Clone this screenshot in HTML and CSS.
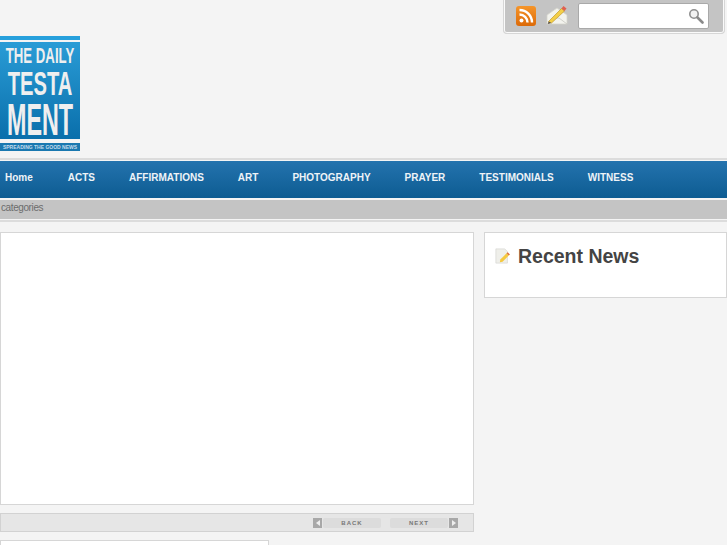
FILE: index.html
```html
<!DOCTYPE html>
<html lang="en">
<head>
    <meta charset="UTF-8">
    <meta name="viewport" content="width=device-width, initial-scale=1.0">
    <title>The Daily Testament</title>
    <link rel="stylesheet" href="styles.css">
</head>
<body>

    <!-- Top -->
    <header class="top">
        <div class="tools-row">
            <div class="tools">
                <a class="rss" href="#">
                    <svg width="20" height="20" viewBox="0 0 20 20">
                        <defs>
                            <linearGradient id="rssBg" x1="0" y1="0" x2="0" y2="1">
                                <stop offset="0" stop-color="#f5952a"/>
                                <stop offset="1" stop-color="#dc6a08"/>
                            </linearGradient>
                        </defs>
                        <rect width="20" height="20" rx="3" fill="url(#rssBg)"/>
                        <circle cx="5.500" cy="14.500" r="2" fill="#fff"/>
                        <path d="M3.500 8.500a8 8 0 0 1 8 8M3.500 4a12.500 12.500 0 0 1 12.500 12.500" fill="none" stroke="#fff" stroke-width="2.400"/>
                    </svg>
                </a>
                <a class="mail" href="#">
                    <svg width="22" height="22" viewBox="0 0 22 22">
                        <path d="M1 11 11 4l10 7v9H1z" fill="#f3f3ee" stroke="#d4d4cc" stroke-width=".8"/>
                        <path d="M1 20l8-6h4l8 6" stroke="#c8c8c0" stroke-width=".8" fill="none"/>
                        <path d="M2.500 17.500 15.500 4.500l3 2.500-13 12z" fill="#f4cf48" stroke="#b98f22" stroke-width=".6"/>
                        <path d="M2.500 17.500 2 20l3.500-1z" fill="#5a5040"/>
                        <path d="M15.500 4.500 17.500 2l3 2.500-2 2.500z" fill="#e0604f"/>
                    </svg>
                </a>
                <div class="search">
                    <svg width="16" height="16" viewBox="0 0 16 16">
                        <circle cx="6" cy="6" r="4.200" fill="#f2f2f2" stroke="#8f8f8f" stroke-width="1.600"/>
                        <path d="M9.500 9.500 14.500 14.500" stroke="#8a8a8a" stroke-width="2.600" stroke-linecap="round"/>
                    </svg>
                </div>
            </div>
        </div>

        <a class="logo" href="#">
            <span class="logo-main">
                <span class="logo-l1">THE DAILY</span>
                <span class="logo-l2">TESTA</span>
                <span class="logo-l3">MENT</span>
            </span>
            <span class="logo-tag">SPREADING THE GOOD NEWS</span>
        </a>
    </header>

    <!-- Menu -->
    <nav class="menu">
        <a class="home" href="#">Home</a>
        <a href="#">ACTS</a>
        <a href="#">AFFIRMATIONS</a>
        <a href="#">ART</a>
        <a href="#">PHOTOGRAPHY</a>
        <a href="#">PRAYER</a>
        <a href="#">TESTIMONIALS</a>
        <a href="#">WITNESS</a>
    </nav>

    <div class="cats">categories</div>

    <!-- Content -->
    <main class="content">
        <div class="left">
            <div class="feature"></div>
            <div class="pager">
                <span class="arrow arrow-back"></span>
                <a class="pager-btn" href="#">BACK</a>
                <a class="pager-btn next" href="#">NEXT</a>
                <span class="arrow arrow-next"></span>
            </div>
            <div class="post"></div>
        </div>
        <aside class="side">
            <h2>
                <svg width="16" height="16" viewBox="0 0 18 18">
                    <path d="M1 1h10l3 3v13H1z" fill="#efefea" stroke="#d8d8d2" stroke-width=".8"/>
                    <path d="M6 13 13 6l2.500 2.500L8.500 15.500 5.500 16z" fill="#f5c93f"/>
                    <path d="M13 6l1.300-1.300 2.500 2.500L15.500 8.500z" fill="#e0703a"/>
                </svg>
                Recent News
            </h2>
        </aside>
    </main>

</body>
</html>
```

FILE: styles.css
```css
/* Base */
body {
    margin: 0;
    background-color: #f4f4f4;
    font-family: "Liberation Sans", Arial, sans-serif;
}

a {
    text-decoration: none;
}

/* Top */
.top {
    height: 158px;
    border-bottom: 2px solid #dcdcdc;
}

.tools-row {
    display: flex;
    justify-content: flex-end;
    height: 36px;
    padding-right: 2px;
}

.tools {
    display: flex;
    align-items: center;
    box-sizing: border-box;
    width: 222px;
    height: 34px;
    padding: 0 15px 1px 12px;
    background-color: #c4c4c4;
    border: 1px solid #d6d6d6;
    border-top: none;
    border-radius: 0 0 4px 4px;
    box-shadow: inset 1px 0 #fafafa, inset -1px 0 #fafafa, inset 0 -1px #fafafa;
}

.rss {
    display: flex;
}

.mail {
    display: flex;
    margin-left: 10px;
    margin-bottom: 2px;
}

.search {
    display: flex;
    align-items: center;
    justify-content: flex-end;
    box-sizing: border-box;
    width: 132px;
    height: 26px;
    margin-left: 10px;
    padding-right: 4px;
    background-color: #fff;
    border: 1px solid #a9a9a9;
    border-radius: 2px;
}

/* Logo */
.logo {
    display: block;
    box-sizing: border-box;
    width: 80px;
    height: 115px;
    border-top: 4px solid #27a0dc;
}

.logo-main {
    display: block;
    box-sizing: border-box;
    height: 97px;
    margin-top: 2px;
    padding-top: 3px;
    color: #efefef;
    white-space: nowrap;
    background: linear-gradient(#2a9cd6, #0a6fab);
    font-weight: bold;
}

/* Logo text is squeezed sideways, there is no condensed font */
.logo-main span {
    display: flex;
    justify-content: center;
}

.logo-main .logo-l1 {
    font-size: 22px;
    line-height: 22px;
    transform: scaleX(.6);
}

.logo-main .logo-l2 {
    font-size: 33px;
    line-height: 33px;
    transform: scaleX(.61);
}

.logo-main .logo-l3 {
    font-size: 44px;
    line-height: 39px;
    transform: scaleX(.53);
}

.logo-tag {
    display: block;
    height: 8px;
    margin-top: 4px;
    overflow: hidden;
    color: #c3dcec;
    text-align: center;
    white-space: nowrap;
    background-color: #1a78b0;
    font-size: 5px;
    font-weight: bold;
    line-height: 8px;
}

/* Menu */
.menu {
    display: flex;
    align-items: center;
    gap: 34px;
    box-sizing: border-box;
    height: 37px;
    margin-top: 1px;
    padding: 0 0 4px 5px;
    background: linear-gradient(#2473ae, #0d5c92);
}

.menu a {
    color: #eef3f7;
    font-size: 10px;
    font-weight: bold;
}

.menu .home {
    margin-right: 1px;
}

.cats {
    height: 19px;
    margin-top: 2px;
    padding-bottom: 1px;
    color: #6c6c6c;
    background-color: #c4c4c4;
    background-clip: content-box;
    border-bottom: 2px solid #dcdcdc;
    font-size: 10px;
    line-height: 16px;
    letter-spacing: -.4px;
    text-indent: 1px;
}

/* Content */
.content {
    display: flex;
    align-items: flex-start;
    justify-content: space-between;
    height: 313px;
    margin-top: 10px;
    overflow: hidden;
}

.left {
    width: 474px;
}

.feature {
    box-sizing: border-box;
    height: 273px;
    background-color: #fff;
    border: 1px solid #d6d6d6;
}

.pager {
    display: flex;
    align-items: center;
    justify-content: flex-end;
    box-sizing: border-box;
    height: 19px;
    margin-top: 8px;
    padding-right: 15px;
    background-color: #e6e6e6;
    border: 1px solid #d2d2d2;
}

.arrow {
    display: flex;
    align-items: center;
    justify-content: center;
    width: 9px;
    height: 10px;
    background-color: #a8a8a8;
}

.arrow::before {
    content: "";
    border-top: 3px solid transparent;
    border-bottom: 3px solid transparent;
}

.arrow-back::before {
    border-right: 4px solid #eee;
}

.arrow-next::before {
    border-left: 4px solid #eee;
}

.pager-btn {
    width: 58px;
    margin-left: 1px;
    color: #777;
    text-align: center;
    background-color: #dcdcdc;
    border-radius: 2px;
    font-size: 6px;
    font-weight: bold;
    line-height: 10px;
    letter-spacing: 1px;
}

.pager-btn.next {
    margin-left: 9px;
    margin-right: 1px;
}

.post {
    box-sizing: border-box;
    width: 269px;
    height: 40px;
    margin-top: 8px;
    background-color: #fff;
    border: 1px solid #d6d6d6;
}

/* Sidebar */
.side {
    box-sizing: border-box;
    width: 243px;
    height: 66px;
    padding: 10px 10px 0;
    background-color: #fff;
    border: 1px solid #d6d6d6;
}

.side h2 {
    display: flex;
    align-items: center;
    gap: 7px;
    margin: 0;
    color: #444;
    font-size: 19.5px;
    line-height: 26px;
}
```
